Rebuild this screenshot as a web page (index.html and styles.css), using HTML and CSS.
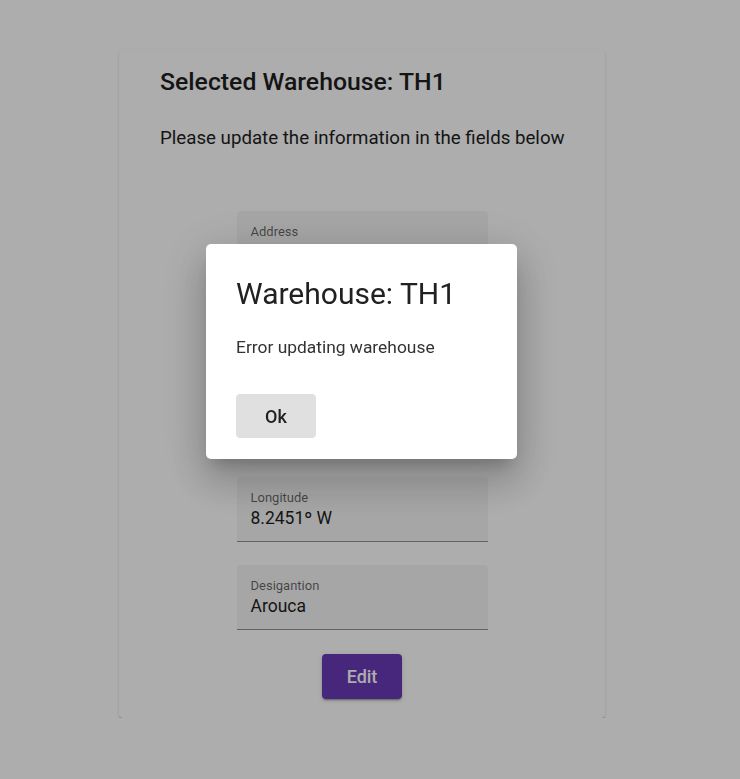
FILE: index.html
```html
<!DOCTYPE html>
<html>
<head>
<meta charset="utf-8">
<link rel="stylesheet" href="styles.css">
</head>
<body>
<div class="page">
  <div class="card">
    <h2 class="card-title">Selected Warehouse: TH1</h2>
    <p class="card-sub">Please update the information in the fields below</p>
    <form class="form">
      <div class="field"><span class="label">Address</span><span class="value"></span></div>
      <div class="field"><span class="label"></span><span class="value"></span></div>
      <div class="field"><span class="label"></span><span class="value"></span></div>
      <div class="field"><span class="label">Longitude</span><span class="value">8.2451º W</span></div>
      <div class="field"><span class="label">Desigantion</span><span class="value">Arouca</span></div>
      <button type="button" class="edit-btn">Edit</button>
    </form>
  </div>
</div>
<div class="overlay"></div>
<div class="dialog">
  <h1 class="dialog-title">Warehouse: TH1</h1>
  <p class="dialog-text">Error updating warehouse</p>
  <button type="button" class="ok-btn">Ok</button>
</div>
</body>
</html>
```
FILE: styles.css
```css
html, body {
  margin: 0;
  padding: 0;
  background: #ffffff;
  font-family: Roboto, "Liberation Sans", sans-serif;
  color: #212121;
}
.page {
  padding: 50px 0 0 119px;
}
.card {
  width: 486px;
  height: 668px;
  box-sizing: border-box;
  background: #fff;
  border-radius: 4px;
  box-shadow: 0 2px 1px -1px rgba(0,0,0,.2), 0 1px 1px 0 rgba(0,0,0,.14), 0 1px 3px 0 rgba(0,0,0,.12);
  padding: 18px 0 0 41px;
}
.card-title {
  margin: 0;
  font-size: 24.8px;
  font-weight: 500;
  line-height: 28px;
  color: #1e1e1e;
}
.card-sub {
  margin: 30px 0 0;
  font-size: 18.7px;
  line-height: 24px;
  color: #1e1e1e;
}
.form {
  display: flex;
  flex-direction: column;
  align-items: center;
  margin: 61px 0 0 -41px;
}
.field {
  width: 251px;
  height: 65px;
  box-sizing: border-box;
  background: rgba(0,0,0,.04);
  border-radius: 4px 4px 0 0;
  border-bottom: 1px solid rgba(0,0,0,.42);
  padding: 13px 14px 0;
  display: flex;
  flex-direction: column;
  margin-bottom: 23.5px;
}
.label {
  min-height: 15px;
  font-size: 13px;
  line-height: 15px;
  color: rgba(0,0,0,.6);
}
.value {
  min-height: 24px;
  margin-top: 1px;
  font-size: 17.5px;
  line-height: 24px;
  color: #1e1e1e;
}
.edit-btn {
  width: 80px;
  height: 45px;
  border: none;
  border-radius: 4px;
  background: #673ab7;
  color: #fff;
  font-family: Roboto, "Liberation Sans", sans-serif;
  font-size: 18px;
  font-weight: 500;
  box-shadow: 0 3px 1px -2px rgba(0,0,0,.2), 0 2px 2px 0 rgba(0,0,0,.14), 0 1px 5px 0 rgba(0,0,0,.12);
}
.overlay {
  position: fixed;
  inset: 0;
  background: rgba(0,0,0,.32);
}
.dialog {
  position: fixed;
  left: 206px;
  top: 244px;
  width: 311px;
  height: 215px;
  box-sizing: border-box;
  background: #fff;
  border-radius: 5px;
  padding: 24px 30px;
  box-shadow: 0 11px 15px -7px rgba(0,0,0,.2), 0 24px 38px 3px rgba(0,0,0,.14), 0 9px 46px 8px rgba(0,0,0,.12);
}
.dialog-title {
  margin: 0;
  font-size: 30px;
  font-weight: 400;
  line-height: 52px;
  color: #212121;
}
.dialog-text {
  margin: 17px 0 0;
  font-size: 17.4px;
  line-height: 20px;
  color: #333;
}
.ok-btn {
  margin-top: 37px;
  width: 80px;
  height: 44px;
  border: none;
  border-radius: 4px;
  background: #e0e0e0;
  color: #212121;
  font-family: Roboto, "Liberation Sans", sans-serif;
  font-size: 18px;
  font-weight: 500;
}
```
